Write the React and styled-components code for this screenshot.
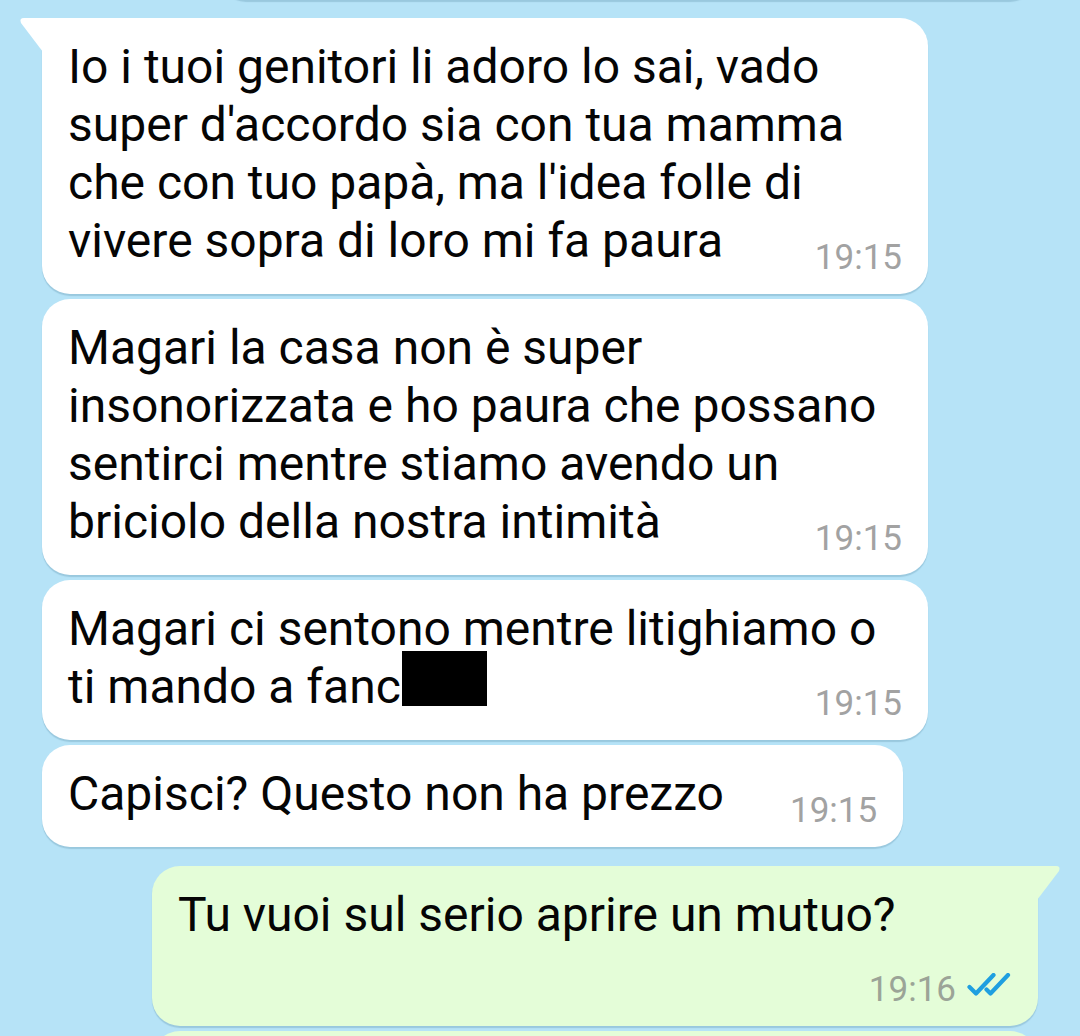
import styled, { createGlobalStyle } from 'styled-components';

const GlobalStyle = createGlobalStyle`
  html, body {
    margin: 0;
    padding: 0;
    background: #b6e3f7;
  }
  * {
    box-sizing: border-box;
  }
`;

const Screen = styled.div`
  width: 1080px;
  height: 1036px;
  overflow: hidden;
  background: #b6e3f7;
  font-family: Roboto, "Noto Sans", "Liberation Sans", sans-serif;
  display: flex;
  flex-direction: column;
  gap: 18px;
`;

const Group = styled.div`
  display: flex;
  flex-direction: column;
  gap: 5px;
  margin-top: ${props => props.$offset || 0}px;
`;

const Bubble = styled.div`
  position: relative;
  align-self: ${props => props.$out ? 'flex-end' : 'flex-start'};
  margin: ${props => props.$out ? '0 42px 0 0' : '0 0 0 42px'};
  width: ${props => props.$wide ? '886px' : 'fit-content'};
  max-width: 886px;
  padding: 20px 26px 16px 26px;
  background: ${props => props.$out ? '#e4fdd8' : '#ffffff'};
  border-radius: 28px;
  ${props => props.$tail && (props.$out ? 'border-top-right-radius: 0;' : 'border-top-left-radius: 0;')}
  box-shadow: 0 2px 1px rgba(40, 95, 125, 0.2);
  display: flex;
  flex-wrap: wrap;
  align-items: flex-end;
  column-gap: 66px;

  &::before {
    content: ${props => props.$tail ? "''" : 'none'};
    position: absolute;
    top: 0;
    ${props => props.$out ? 'right: -22px;' : 'left: -22px;'}
    width: 23px;
    height: 34px;
    background: inherit;
    clip-path: ${props => props.$out
      ? "path('M0 0 L19 0 Q24 0 22 5 L0 34 Z')"
      : "path('M4 0 L23 0 L23 34 L1 5 Q-1 0 4 0 Z')"};
  }
`;

// bubbles that are only partly on screen, above and below
const Cut = styled(Bubble)`
  width: ${props => props.$w}px;
  height: ${props => props.$h}px;
  margin-top: ${props => props.$mt || 0}px;
  flex-shrink: 0;
`;

const Text = styled.div`
  min-width: 0;
  margin-bottom: 8px;
  font-size: 48px;
  line-height: 58px;
  color: #050505;
`;

const Redacted = styled.span`
  display: inline-block;
  width: 85px;
  height: 55px;
  margin-left: 1px;
  margin-top: -8px;
  background: #000;
  vertical-align: -3px;
`;

const Meta = styled.div`
  display: flex;
  align-items: flex-start;
  margin-left: auto;
  margin-top: ${props => props.$ownLine ? '17px' : '-41px'};
  height: 41px;
  font-size: 35px;
  line-height: 41px;
  color: ${props => props.$out ? '#9ba497' : '#a2a2a2'};
  white-space: nowrap;
`;

const Ticks = styled.svg`
  margin-left: 10px;
  margin-top: 4px;
  flex-shrink: 0;
`;

function ReadTicks() {
  return (
    <Ticks width="46" height="26" viewBox="0 0 46 26" fill="none"
      stroke="#1f9fe0" strokeWidth="4.2" strokeLinecap="round" strokeLinejoin="round">
      <path d="M3.5 14 L10 20.5 L27.5 2" />
      <path d="M20.5 16.5 L24.5 20.5 L42 2" />
    </Ticks>
  );
}

export default function App() {
  return (
    <>
      <GlobalStyle />
      <Screen>
        <Cut $out $w={820} $h={60} $mt={-60} />

        <Group>
          <Bubble $tail>
            <Text>
              Io i tuoi genitori li adoro lo sai, vado super d'accordo sia con tua mamma che con tuo papà, ma l'idea folle di vivere sopra di loro mi fa paura
            </Text>
            <Meta>19:15</Meta>
          </Bubble>
          <Bubble>
            <Text>
              Magari la casa non è super insonorizzata e ho paura che possano sentirci mentre stiamo avendo un briciolo della nostra intimità
            </Text>
            <Meta>19:15</Meta>
          </Bubble>
          <Bubble>
            <Text>
              Magari ci sentono mentre litighiamo o ti mando a fanc<Redacted />
            </Text>
            <Meta>19:15</Meta>
          </Bubble>
          <Bubble>
            <Text>Capisci? Questo non ha prezzo</Text>
            <Meta>19:15</Meta>
          </Bubble>
        </Group>

        <Group $offset={1}>
          <Bubble $out $tail $wide>
            <Text>Tu vuoi sul serio aprire un mutuo?</Text>
            <Meta $out $ownLine>
              19:16
              <ReadTicks />
            </Meta>
          </Bubble>
          <Cut $out $w={886} $h={80} />
        </Group>
      </Screen>
    </>
  );
}
